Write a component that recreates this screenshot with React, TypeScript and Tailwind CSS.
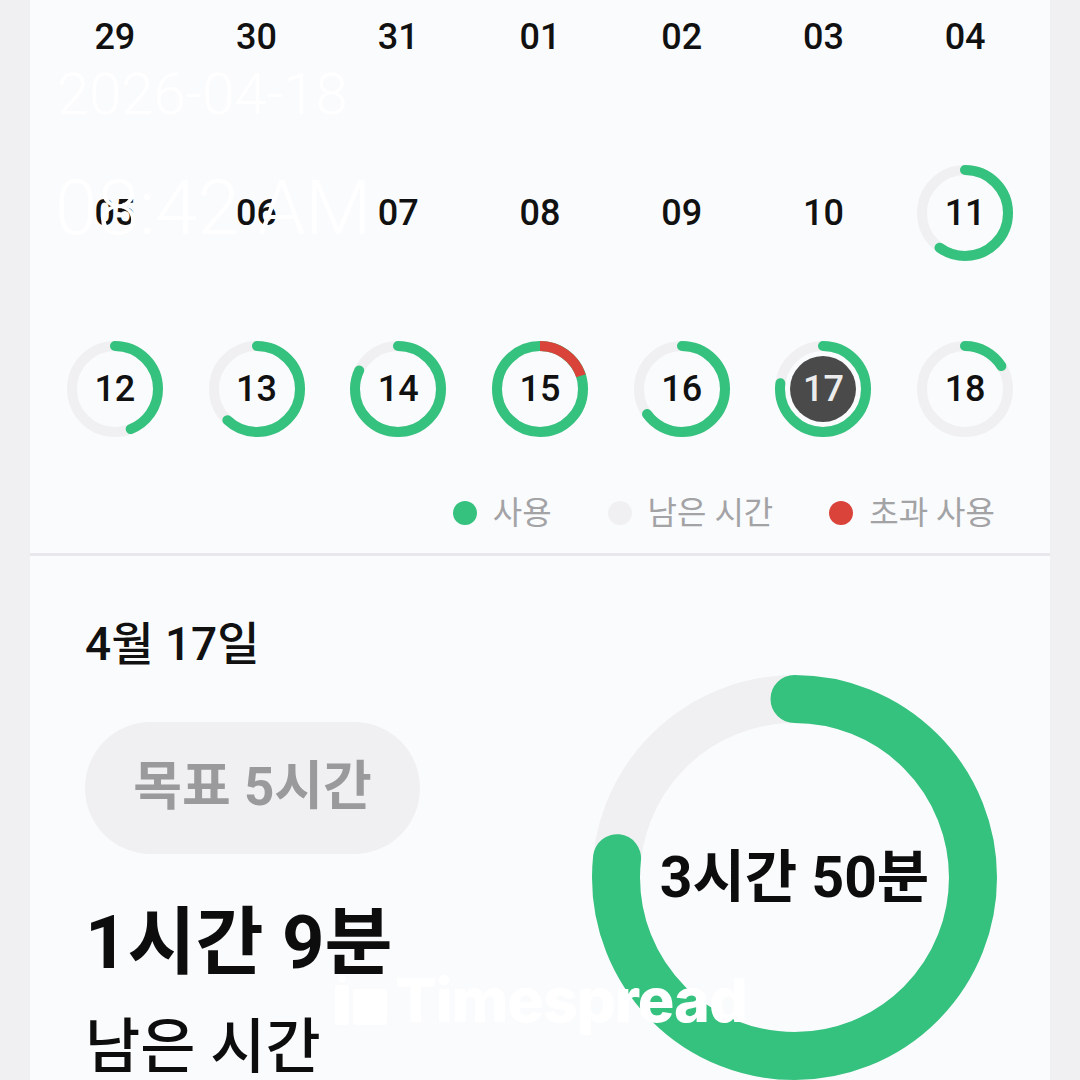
import React from 'react'

const GREEN = '#34c27e'
const TRACK = '#f0f0f2'
const RED = '#d9433a'

type Day = { label: string; value?: number; over?: number; selected?: boolean }

const days: Day[] = [
  { label: '29' },
  { label: '30' },
  { label: '31' },
  { label: '01' },
  { label: '02' },
  { label: '03' },
  { label: '04' },
  { label: '05' },
  { label: '06' },
  { label: '07' },
  { label: '08' },
  { label: '09' },
  { label: '10' },
  { label: '11', value: 0.6 },
  { label: '12', value: 0.44 },
  { label: '13', value: 0.62 },
  { label: '14', value: 0.82 },
  { label: '15', value: 1, over: 0.2 },
  { label: '16', value: 0.65 },
  { label: '17', value: 0.77, selected: true },
  { label: '18', value: 0.16 },
]

const Ring = ({ size, stroke, value, over }: { size: number; stroke: number; value: number; over?: number }) => {
  const r = (size - stroke) / 2
  const c = 2 * Math.PI * r
  const half = size / 2
  return (
    <svg width={size} height={size} className="absolute inset-0 -rotate-90">
      <circle cx={half} cy={half} r={r} fill="none" stroke={TRACK} strokeWidth={stroke} />
      {value >= 1 ? (
        <circle cx={half} cy={half} r={r} fill="none" stroke={GREEN} strokeWidth={stroke} />
      ) : (
        <circle
          cx={half}
          cy={half}
          r={r}
          fill="none"
          stroke={GREEN}
          strokeWidth={stroke}
          strokeLinecap="round"
          strokeDasharray={`${value * c} ${c}`}
        />
      )}
      {over ? (
        <circle
          cx={half}
          cy={half}
          r={r}
          fill="none"
          stroke={RED}
          strokeWidth={stroke}
          strokeDasharray={`${over * c} ${c}`}
        />
      ) : null}
    </svg>
  )
}

const DayCell = ({ day }: { day: Day }) => {
  return (
    <div className="h-[176px] flex items-center justify-center">
      <div className="relative w-[96px] h-[96px] flex items-center justify-center">
        {day.value !== undefined && <Ring size={96} stroke={10} value={day.value} over={day.over} />}
        {day.selected ? (
          <div className="relative w-[66px] h-[66px] rounded-full bg-[#4a4a4a] flex items-center justify-center text-[36px] font-medium text-[#ececec] leading-none">
            {day.label}
          </div>
        ) : (
          <span className="relative text-[36px] font-medium text-[#111111] leading-none">{day.label}</span>
        )}
      </div>
    </div>
  )
}

const LegendItem = ({ color, label }: { color: string; label: string }) => (
  <div className="flex items-center gap-[16px]">
    <span className="w-[24px] h-[24px] rounded-full" style={{ backgroundColor: color }} />
    <span className="text-[32px] text-[#a3a3a6] leading-none">{label}</span>
  </div>
)

const App = () => {
  return (
    <div className="relative w-[1080px] h-[1080px] overflow-hidden bg-[#f0f0f2] flex justify-center font-['Roboto','Noto_Sans_CJK_KR',sans-serif]">
      <div className="w-[1020px] h-full bg-[#fafbfd] flex flex-col">
        <div className="grid grid-cols-7 px-[14px] -mt-[51px]">
          {days.map((day) => (
            <DayCell key={day.label} day={day} />
          ))}
        </div>

        <div className="mt-[12px] h-[50px] flex items-center justify-end gap-[56px] pr-[55px]">
          <LegendItem color={GREEN} label="사용" />
          <LegendItem color={TRACK} label="남은 시간" />
          <LegendItem color={RED} label="초과 사용" />
        </div>

        <div className="mt-[17px] h-[3px] bg-[#e8e8ec]" />

        <div className="flex justify-between pl-[55px] pr-[53px] pt-[60px]">
          <div className="flex flex-col items-start">
            <div className="text-[46px] font-medium text-[#111111] leading-[56px]">4월 17일</div>
            <div className="mt-[50px] w-[335px] h-[132px] rounded-full bg-[#f0f0f2] flex items-center justify-center text-[53px] font-bold text-[#9a9a9c]">
              목표 5시간
            </div>
            <div className="mt-[52px] text-[74px] font-bold text-[#0d0d0d] leading-none">1시간 9분</div>
            <div className="mt-[38px] text-[60px] font-medium text-[#0d0d0d] leading-none">남은 시간</div>
          </div>

          <div className="mt-[59px] relative w-[405px] h-[405px] flex items-center justify-center shrink-0">
            <Ring size={405} stroke={48} value={0.767} />
            <span className="relative text-[57px] font-bold text-[#0d0d0d] leading-none">3시간 50분</span>
          </div>
        </div>
      </div>

      <div className="absolute left-[57px] top-[65px] text-[58px] font-light text-white leading-none">2026-04-18</div>
      <div className="absolute left-[55px] top-[170px] text-[76px] font-light text-white leading-none">08:42 AM</div>

      <div className="absolute left-0 right-0 top-[970px] flex items-center justify-center gap-[6px]">
        <svg width="56" height="52" viewBox="0 0 56 52">
          <rect x="2" y="10" width="14" height="40" rx="3" fill="white" />
          <circle cx="9" cy="4" r="3.5" fill="white" />
          <rect x="20" y="14" width="34" height="36" rx="3" fill="white" />
        </svg>
        <span className="text-[61px] font-extrabold text-white leading-none tracking-[-1px] font-['Inter',sans-serif]">
          Timespread
        </span>
      </div>
    </div>
  )
}

export default App
